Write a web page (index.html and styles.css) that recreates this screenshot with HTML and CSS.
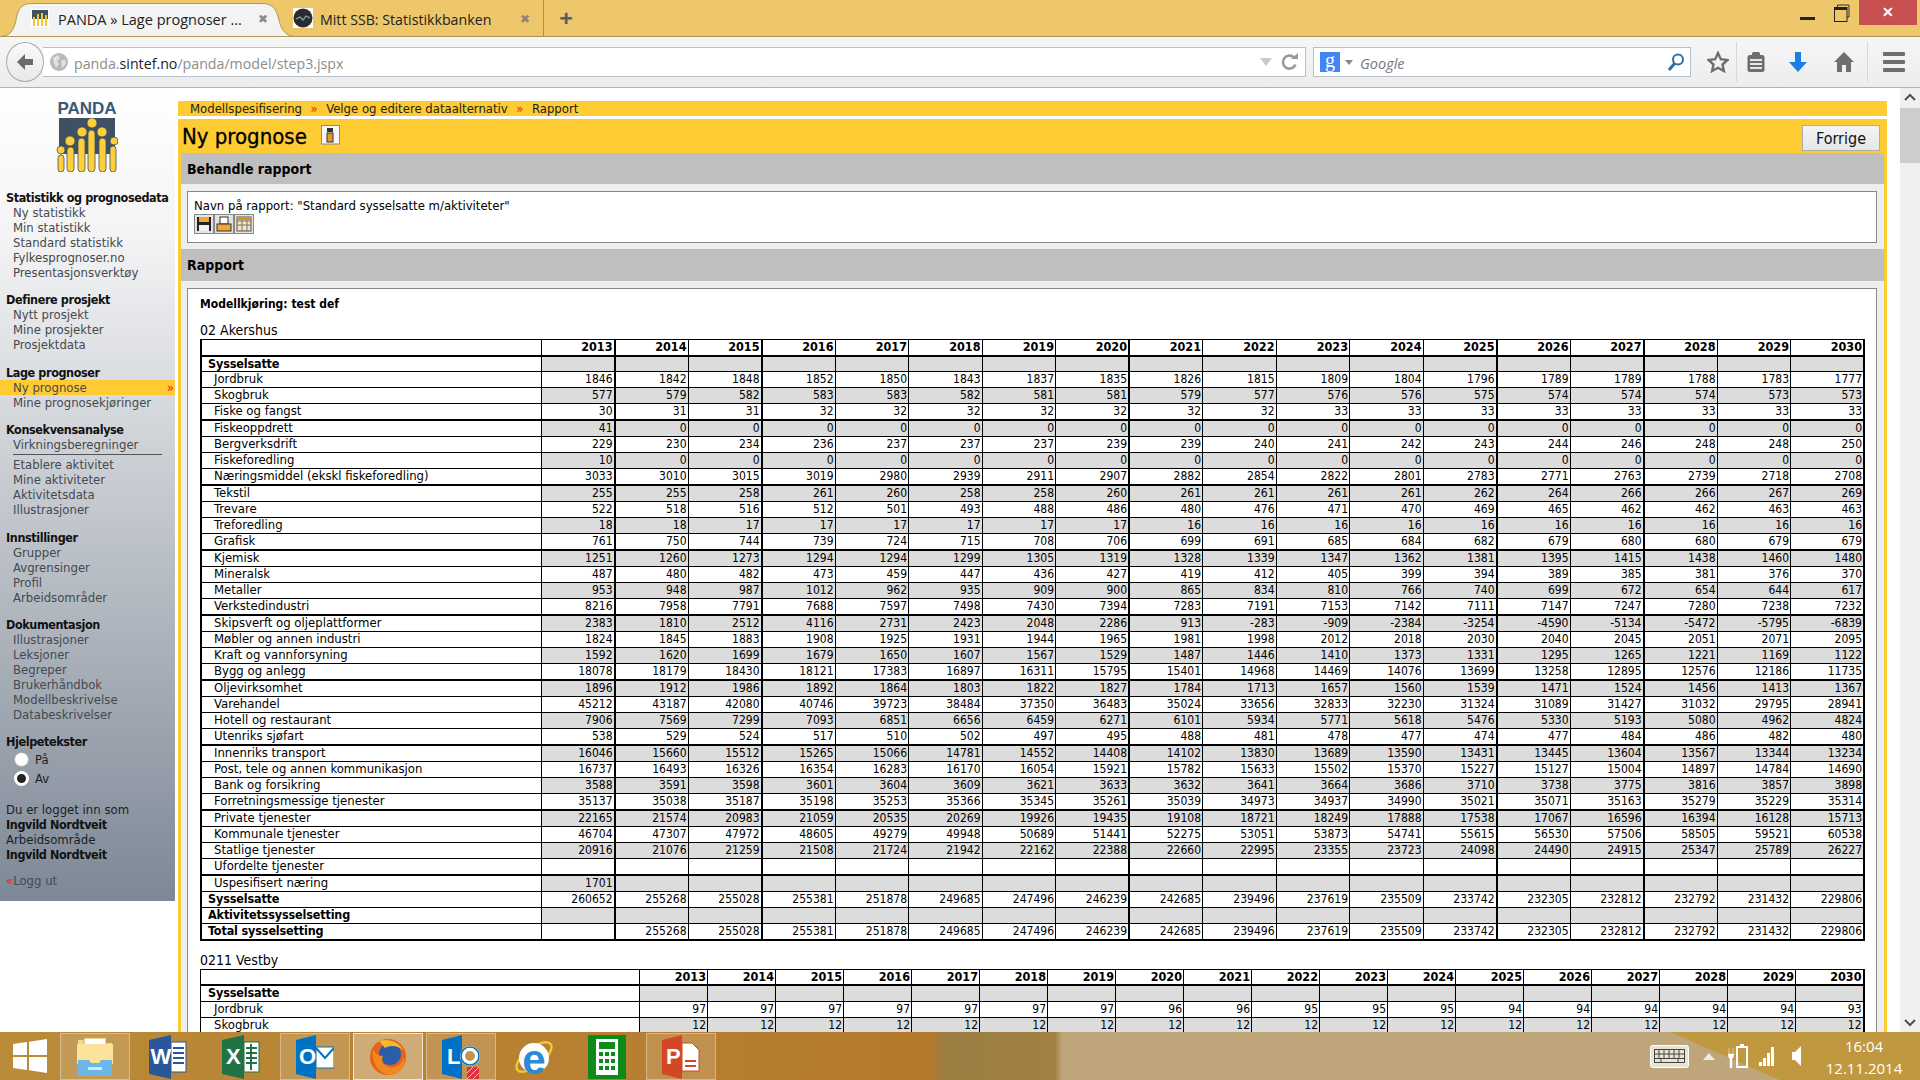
FILE: index.html
```html
<!DOCTYPE html>
<html lang="en">
<head>
    <meta charset="UTF-8">
    <title>PANDA » Lage prognoser</title>
    <link rel="stylesheet" href="styles.css">
</head>
<body>
    <div class="titlebar">
        <div class="tab tab-active">
            <svg class="tab-shape" width="296" height="37"><path d="M0 36.5C10 36.5 14 30 16 20C18 8 22 3.5 32 3.5L262 3.5C272 3.5 276 8 279 20C281 30 286 36.5 296 36.5Z" fill="#f3f3f3" stroke="#b3975a"/></svg>
            <svg class="favicon" width="18" height="18" viewBox="0 0 18 18"><rect width="18" height="18" fill="#fff"/><rect x="1" y="1" width="16" height="9" fill="#3e5062"/><g fill="#f5c72c"><rect x="2" y="8" width="2" height="9"/><rect x="6" y="5" width="2" height="12"/><rect x="10" y="4" width="2" height="13"/><rect x="14" y="6" width="2" height="11"/></g></svg>
            <span class="tab-label tab-label-first">PANDA » Lage prognoser ...</span>
            <span class="tab-close">✖</span>
        </div>
        <div class="tab tab-other">
            <svg class="favicon" width="20" height="20" viewBox="0 0 20 20"><rect width="20" height="20" fill="#fff"/><circle cx="10" cy="10" r="9.5" fill="#2b2b2b"/><path d="M3 11L7 9L10 12L13 8L17 10" fill="none" stroke="#8aa" stroke-width="1.2"/></svg>
            <span class="tab-label">Mitt SSB: Statistikkbanken</span>
            <span class="tab-close">✖</span>
        </div>
        <div class="new-tab">+</div>
        <div class="window-controls">
            <svg class="win-min" width="15" height="3"><rect width="15" height="3" fill="#222"/></svg>
            <svg class="win-max" width="16" height="18" viewBox="0 0 16 18"><path d="M3.5 3V1H15V13H13" fill="none" stroke="#333"/><rect x="0.5" y="3.5" width="12.5" height="14" fill="none" stroke="#222"/><rect x="0" y="3" width="13" height="3" fill="#222"/></svg>
            <div class="win-close">✕</div>
        </div>
    </div>

    <div class="toolbar">
        <div class="back-btn">
            <svg width="20" height="20" viewBox="0 0 20 20"><path d="M10 2L2 10L10 18V13H18V7H10Z" fill="#6b6b6b"/></svg>
        </div>
        <div class="url-bar">
            <svg class="globe" width="18" height="18" viewBox="0 0 18 18"><circle cx="9" cy="9" r="9" fill="#b9b9b9"/><path d="M3 5L8 2L10 5L7 8L9 11L6 15L4 10ZM11 8L15 6L16 11L12 15Z" fill="#e2e2e2"/></svg>
            <span class="url-text">panda.<b>sintef.no</b>/panda/model/step3.jspx</span>
            <svg class="url-drop" width="12" height="8"><path d="M0 0H12L6 8Z" fill="#c9c9c9"/></svg>
            <svg class="url-reload" width="20" height="20" viewBox="0 0 20 20"><path d="M15.5 12.5A6.5 6.5 0 1 1 14 5.5" fill="none" stroke="#9a9a9a" stroke-width="2.6"/><path d="M11 7H18V1Z" fill="#9a9a9a"/></svg>
        </div>
        <div class="search-bar">
            <div class="search-engine">g</div>
            <svg class="search-drop" width="8" height="5"><path d="M0 0H8L4 5Z" fill="#888"/></svg>
            <span class="search-text">Google</span>
            <svg width="18" height="20" viewBox="0 0 18 20"><circle cx="11" cy="7.5" r="5" fill="none" stroke="#2f6ea8" stroke-width="2"/><path d="M7.5 11.5L2 18" stroke="#2f6ea8" stroke-width="3"/></svg>
        </div>
        <div class="tool-slot tool-star">
            <svg width="22" height="22" viewBox="0 0 22 22"><path d="M11 2L13.8 8.2L20.5 9L15.5 13.5L16.9 20L11 16.8L5.1 20L6.5 13.5L1.5 9L8.2 8.2Z" fill="none" stroke="#6e6e6e" stroke-width="2.4"/></svg>
        </div>
        <div class="tool-slot tool-clip">
            <svg width="20" height="22" viewBox="0 0 20 22"><rect x="1.5" y="4" width="17" height="17" rx="2.5" fill="#6e6e6e"/><rect x="6" y="1" width="8" height="5" rx="1.5" fill="#6e6e6e"/><g fill="#e8e8e8"><rect x="4" y="8" width="12" height="2"/><rect x="4" y="12" width="12" height="2"/><rect x="4" y="16" width="12" height="2"/></g></svg>
        </div>
        <div class="tool-slot tool-down">
            <svg width="20" height="22" viewBox="0 0 20 22"><path d="M7 1H13V11H19L10 21L1 11H7Z" fill="#1a7fe6"/></svg>
        </div>
        <div class="tool-slot tool-home">
            <svg width="22" height="22" viewBox="0 0 22 22"><path d="M11 1L21 11H18V21H13V14H9V21H4V11H1Z" fill="#6e6e6e"/></svg>
        </div>
        <div class="tool-slot tool-menu">
            <svg width="22" height="20" viewBox="0 0 22 20"><g fill="#6e6e6e"><rect width="22" height="4" rx="1"/><rect y="8" width="22" height="4" rx="1"/><rect y="16" width="22" height="4" rx="1"/></g></svg>
        </div>
    </div>

    <div class="viewport">
        <div class="page">
            <div class="sidebar">
                <div class="logo">
                    <div class="logo-name">PANDA</div>
                    <svg width="62" height="54" viewBox="0 0 62 54">
                        <rect x="3" y="0" width="56" height="36" fill="#3e5062"/>
                        <g fill="#ffcf3a" stroke="#3e5062" stroke-width="0.8">
                            <circle cx="36" cy="5" r="5"/>
                            <circle cx="26" cy="14" r="5"/><circle cx="46" cy="14" r="5"/>
                            <circle cx="14" cy="23" r="5"/><circle cx="58" cy="23" r="4"/>
                            <circle cx="5" cy="32" r="4"/>
                            <rect x="2" y="37" width="6" height="17" rx="3"/>
                            <rect x="11" y="29" width="7" height="25" rx="3.5"/>
                            <rect x="22" y="20" width="7" height="34" rx="3.5"/>
                            <rect x="32" y="12" width="7" height="42" rx="3.5"/>
                            <rect x="43" y="20" width="7" height="34" rx="3.5"/>
                            <rect x="54" y="28" width="6" height="26" rx="3"/>
                        </g>
                    </svg>
                </div>
                <div class="nav-group">
                    <div class="nav-head">Statistikk og prognosedata</div>
                    <a class="nav-item">Ny statistikk</a>
                    <a class="nav-item">Min statistikk</a>
                    <a class="nav-item">Standard statistikk</a>
                    <a class="nav-item">Fylkesprognoser.no</a>
                    <a class="nav-item">Presentasjonsverktøy</a>
                </div>
                <div class="nav-group">
                    <div class="nav-head">Definere prosjekt</div>
                    <a class="nav-item">Nytt prosjekt</a>
                    <a class="nav-item">Mine prosjekter</a>
                    <a class="nav-item">Prosjektdata</a>
                </div>
                <div class="nav-group">
                    <div class="nav-head">Lage prognoser</div>
                    <a class="nav-item nav-current">Ny prognose<span class="nav-arrow">»</span></a>
                    <a class="nav-item">Mine prognosekjøringer</a>
                </div>
                <div class="nav-group">
                    <div class="nav-head">Konsekvensanalyse</div>
                    <a class="nav-item">Virkningsberegninger</a>
                    <div class="nav-rule"></div>
                    <a class="nav-item">Etablere aktivitet</a>
                    <a class="nav-item">Mine aktiviteter</a>
                    <a class="nav-item">Aktivitetsdata</a>
                    <a class="nav-item">Illustrasjoner</a>
                </div>
                <div class="nav-group">
                    <div class="nav-head">Innstillinger</div>
                    <a class="nav-item">Grupper</a>
                    <a class="nav-item">Avgrensinger</a>
                    <a class="nav-item">Profil</a>
                    <a class="nav-item">Arbeidsområder</a>
                </div>
                <div class="nav-group">
                    <div class="nav-head">Dokumentasjon</div>
                    <a class="nav-item">Illustrasjoner</a>
                    <a class="nav-item">Leksjoner</a>
                    <a class="nav-item">Begreper</a>
                    <a class="nav-item">Brukerhåndbok</a>
                    <a class="nav-item">Modellbeskrivelse</a>
                    <a class="nav-item">Databeskrivelser</a>
                </div>
                <div class="nav-group nav-help">
                    <div class="nav-head">Hjelpetekster</div>
                    <div class="help-option"><span class="radio"></span>På</div>
                    <div class="help-option"><span class="radio radio-on"></span>Av</div>
                </div>
                <div class="nav-user">
                    <div>Du er logget inn som</div>
                    <div class="nav-head">Ingvild Nordtveit</div>
                    <div>Arbeidsområde</div>
                    <div class="nav-head">Ingvild Nordtveit</div>
                </div>
                <div class="nav-logout"><span class="red">«</span>Logg ut</div>
            </div>

            <div class="main">
                <div class="breadcrumb">
                    <span>Modellspesifisering</span><span class="red">»</span><span>Velge og editere dataalternativ</span><span class="red">»</span><span>Rapport</span>
                </div>
                <div class="panel">
                    <div class="title-row">
                        <span class="page-title">Ny prognose</span>
                        <svg class="info-icon" width="19" height="20" viewBox="0 0 19 20"><rect x="0.5" y="0.5" width="18" height="18.5" fill="#f7f7f7" stroke="#8a8a8a"/><rect x="6" y="3" width="6" height="4" fill="#333"/><rect x="6" y="8" width="6" height="9" fill="#e59a2b" stroke="#333"/></svg>
                        <button class="btn-back">Forrige</button>
                    </div>
                    <div class="section-head">Behandle rapport</div>
                    <div class="section-body">
                        <div class="box box-report">
                            <div>Navn på rapport: "Standard sysselsatte m/aktiviteter"</div>
                            <div class="report-icons">
                                <svg width="20" height="20" viewBox="0 0 20 20"><rect x="0.5" y="0.5" width="19" height="19" fill="#e4e4e4" stroke="#888"/><rect x="3" y="3" width="14" height="14" fill="#222"/><rect x="5" y="3" width="10" height="5" fill="#f2a63a"/><rect x="5" y="11" width="10" height="6" fill="#f2f2f2"/></svg><svg width="20" height="20" viewBox="0 0 20 20"><rect x="0.5" y="0.5" width="19" height="19" fill="#e4e4e4" stroke="#888"/><rect x="6" y="3" width="8" height="7" fill="#fff" stroke="#333"/><rect x="3" y="10" width="14" height="7" fill="#f2a63a" stroke="#333"/></svg><svg width="20" height="20" viewBox="0 0 20 20"><rect x="0.5" y="0.5" width="19" height="19" fill="#e4e4e4" stroke="#888"/><rect x="3" y="3" width="14" height="14" fill="#f7e2c0" stroke="#555"/><path d="M3 7H17M3 11H17M8 3V17M13 3V17" stroke="#777"/><rect x="3" y="3" width="14" height="3" fill="#d9902e"/></svg>
                            </div>
                        </div>
                    </div>
                    <div class="section-head section-head-tall">Rapport</div>
                    <div class="section-body">
                        <div class="box box-tables">
                            <div class="run-name">Modellkjøring: test def</div>
                            <div class="region-name region-first">02 Akershus</div>
                            <table id="table-akershus" class="report-table"></table>
                            <div class="region-name region-next">0211 Vestby</div>
                            <table id="table-vestby" class="report-table report-table-small"></table>
                        </div>
                    </div>
                </div>
            </div>
        </div>
        <div class="scrollbar">
            <svg class="scroll-arrow" width="20" height="20"><path d="M5 12L10 7L15 12" fill="none" stroke="#505050" stroke-width="2"/></svg>
            <div class="scroll-thumb"></div>
            <svg class="scroll-arrow scroll-arrow-down" width="20" height="20"><path d="M5 8L10 13L15 8" fill="none" stroke="#505050" stroke-width="2"/></svg>
        </div>
    </div>

    <div class="taskbar">
        <div class="start-btn">
            <svg width="34" height="34" viewBox="0 0 34 34"><path d="M0 5L14 3V16H0ZM16 2.700L34 0V16H16ZM0 18H14V31L0 29ZM16 18H34V34L16 31.300Z" fill="#fff"/></svg>
        </div>
        <div class="task-app task-open">
            <svg width="38" height="40" viewBox="0 0 38 40"><path d="M2 3H14L17 6H36V20H2Z" fill="#f5d77c"/><rect x="8" y="1" width="22" height="8" fill="#fff" stroke="#cfa94a"/><rect x="1" y="7" width="36" height="20" fill="#fbe49a"/><path d="M2 23H13L15 26H23L25 23H36V39H2Z" fill="#6db7e8"/><path d="M12 30H26V33H12Z" fill="#cfe9f8"/></svg>
        </div>
        <div class="task-app">
            <svg width="38" height="44" viewBox="0 0 38 44"><path d="M22 0L0 5V39L22 44Z" fill="#2b579a"/><rect x="22" y="7" width="15" height="30" fill="#fff" stroke="#2b579a"/><path d="M24 13H35M24 18H35M24 23H35M24 28H35" stroke="#2b579a" stroke-width="2"/><text x="1.500" y="29" class="app-letter">W</text></svg>
        </div>
        <div class="task-app">
            <svg width="38" height="44" viewBox="0 0 38 44"><path d="M22 0L0 5V39L22 44Z" fill="#217346"/><rect x="22" y="7" width="15" height="30" fill="#fff" stroke="#217346"/><path d="M24 13H35M24 18H35M24 23H35M24 28H35M29 9V35" stroke="#217346" stroke-width="2"/><text x="4" y="29" class="app-letter">X</text></svg>
        </div>
        <div class="task-app task-open">
            <svg width="38" height="44" viewBox="0 0 38 44"><path d="M20 0L0 5V39L20 44Z" fill="#0072c6"/><rect x="20" y="12" width="18" height="21" fill="#fff" stroke="#0072c6"/><path d="M20 13L29 23L38 13" fill="none" stroke="#0072c6" stroke-width="2"/><text x="3" y="29" class="app-letter">O</text></svg>
        </div>
        <div class="task-app task-active">
            <svg width="38" height="38" viewBox="0 0 38 38"><circle cx="19" cy="19" r="18" fill="#e8601c"/><circle cx="21" cy="16" r="11" fill="#2b5ea8"/><path d="M4 12C2 24 10 37 22 37C32 37 37 26 35 19C33 27 26 31 19 29C14 27 12 22 14 18C9 18 6 15 4 12Z" fill="#f0891e"/><path d="M10 3C18 0 30 3 34 12C28 7 20 7 16 10Z" fill="#f5b82e"/></svg>
        </div>
        <div class="task-app task-open">
            <svg width="38" height="44" viewBox="0 0 38 44"><path d="M20 0L0 5V39L20 44Z" fill="#0072c6"/><text x="5" y="29" class="app-letter">L</text><circle cx="28" cy="21" r="7.500" fill="none" stroke="#fff" stroke-width="5"/><circle cx="28" cy="21" r="9" fill="none" stroke="#0072c6" stroke-width="1.500"/><rect x="25" y="32" width="12" height="12" fill="#d8343a"/><path d="M25 38L31 32M25 44L37 32M31 44L37 38" stroke="#eca" stroke-width="1"/></svg>
        </div>
        <div class="task-app">
            <svg width="38" height="44" viewBox="0 0 38 44"><ellipse cx="19" cy="22" rx="21" ry="9" transform="rotate(-38 19 22)" fill="none" stroke="#f5c52c" stroke-width="2.500"/><circle cx="19" cy="23" r="15" fill="#fff"/><text x="19" y="39" text-anchor="middle" class="ie-letter">e</text></svg>
        </div>
        <div class="task-app">
            <svg width="38" height="44" viewBox="0 0 38 44"><rect width="38" height="44" fill="#0d8a1a"/><rect x="8" y="4" width="22" height="36" fill="#fff"/><rect x="11" y="7" width="16" height="7" fill="#0d8a1a"/><g fill="#0d8a1a"><rect x="11" y="17" width="4" height="4"/><rect x="17" y="17" width="4" height="4"/><rect x="23" y="17" width="4" height="4"/><rect x="11" y="24" width="4" height="4"/><rect x="17" y="24" width="4" height="4"/><rect x="23" y="24" width="4" height="4"/><rect x="11" y="31" width="4" height="4"/><rect x="17" y="31" width="4" height="4"/><rect x="23" y="31" width="4" height="4"/></g></svg>
        </div>
        <div class="task-app task-open">
            <svg width="38" height="44" viewBox="0 0 38 44"><path d="M20 0L0 5V39L20 44Z" fill="#d24726"/><path d="M20 8H30L37 15V36H20Z" fill="#fff" stroke="#d24726"/><path d="M23 26H34M23 31H34" stroke="#d24726" stroke-width="2"/><text x="4" y="29" class="app-letter">P</text></svg>
        </div>
        <div class="tray">
            <svg class="tray-keyboard" width="39" height="23" viewBox="0 0 39 23"><rect x="0.5" y="0.5" width="38" height="22" rx="2" fill="#e9e3d4" stroke="#fff"/><g fill="none" stroke="#444"><rect x="4.500" y="4.500" width="30" height="13"/><path d="M4.500 9H34.500M4.500 13.500H34.500M9 4.500V13.500M14 4.500V13.500M19 4.500V13.500M24 4.500V13.500M29 4.500V13.500M11 13.500V17.500M28 13.500V17.500"/></g></svg>
            <svg class="tray-up" width="12" height="7"><path d="M0 7L6 0L12 7Z" fill="#f0ece0"/></svg>
            <svg class="tray-power" width="20" height="24" viewBox="0 0 20 24"><path d="M1 4V10M5 4V10M0 10H6L5 14H4V24H2V14H1Z" fill="#fff" stroke="#fff" stroke-width="0.500"/><rect x="9" y="3" width="10" height="20" fill="none" stroke="#fff" stroke-width="2"/><rect x="12" y="0" width="4" height="3" fill="#fff"/></svg>
            <svg class="tray-signal" width="16" height="20" viewBox="0 0 16 20"><g fill="#fff"><rect x="0" y="16" width="3" height="4"/><rect x="4" y="12" width="3" height="8"/><rect x="8" y="7" width="3" height="13"/><rect x="12" y="1" width="3" height="19"/></g></svg>
            <svg class="tray-sound" width="10" height="20" viewBox="0 0 10 20"><path d="M9 0V20L3 14H0V6H3Z" fill="#fff"/></svg>
            <div class="clock">
                <div>16:04</div>
                <div>12.11.2014</div>
            </div>
        </div>
    </div>

    <script src="tables.js"></script>
</body>
</html>
```

FILE: styles.css
```css
* {
    box-sizing: border-box;
}
html, body {
    margin: 0;
    height: 100%;
    overflow: hidden;
}
body {
    width: 1920px;
    height: 1080px;
    display: flex;
    flex-direction: column;
    font-family: "DejaVu Sans Condensed", "DejaVu Sans", sans-serif;
    font-size: 13px;
    line-height: 15px;
    color: #000;
    background: #fff;
}
.red {
    color: #e02a10;
}

/* window title bar and tabs */
.titlebar {
    height: 37px;
    flex: none;
    display: flex;
    background: #eec76a;
    border-bottom: 1px solid #a8905a;
    font-family: "Open Sans", sans-serif;
    font-size: 14.2px;
    color: #222;
}
.tab {
    position: relative;
    height: 36px;
    display: flex;
    align-items: center;
}
.tab-shape {
    position: absolute;
    left: 0;
    top: 0;
}
.tab-active {
    width: 293px;
    padding-left: 31px;
}
.tab-other {
    width: 251px;
    border-right: 1px solid #a8905a;
}
.favicon {
    position: relative;
    flex: none;
}
.tab-label {
    position: relative;
    margin: 2px 0 0 7px;
    white-space: nowrap;
}
.tab-label-first {
    margin-left: 9px;
    font-size: 14.5px;
}
.tab-close {
    position: absolute;
    top: 11px;
    font-size: 12px;
    color: #8a8a8a;
}
.tab-active .tab-close {
    left: 258px;
}
.tab-other .tab-close {
    left: 227px;
    color: #8f8570;
}
.new-tab {
    width: 44px;
    text-align: center;
    font-size: 24px;
    line-height: 36px;
    font-weight: 700;
    color: #4c6172;
}
.window-controls {
    margin-left: auto;
    display: flex;
    align-items: flex-start;
    padding-right: 3px;
}
.win-min {
    margin: 17px 19px 0 0;
}
.win-max {
    margin: 4px 9px 0 0;
}
.win-close {
    width: 58px;
    height: 25px;
    background: #c75050;
    color: #fff;
    text-align: center;
    font-size: 14px;
    line-height: 24px;
    font-weight: 700;
}

/* browser toolbar */
.toolbar {
    height: 51px;
    flex: none;
    display: flex;
    align-items: center;
    padding-left: 6px;
    background: linear-gradient(#f6f6f6, #ededed);
    border-bottom: 1px solid #b2b2b2;
}
.back-btn {
    position: relative;
    z-index: 1;
    width: 38px;
    height: 40px;
    flex: none;
    display: flex;
    align-items: center;
    justify-content: center;
    border: 1px solid #a9a9a9;
    border-radius: 50%;
    background: linear-gradient(#fafafa, #e9e9e9);
}
.url-bar {
    width: 1263px;
    height: 30px;
    margin-left: -1px;
    flex: none;
    display: flex;
    align-items: center;
    padding-left: 7px;
    background: #fff;
    border: 1px solid #b8c0cc;
    border-left: none;
    font-family: "Open Sans", sans-serif;
    font-size: 14.2px;
    color: #8c8c8c;
}
.url-text {
    margin-top: 2px;
}
.url-text b {
    font-weight: 400;
    color: #222;
}
.globe {
    margin-right: 6px;
}
.url-drop {
    margin-left: auto;
    margin-right: -3px;
}
.url-reload {
    margin: 0 5px 0 11px;
}
.search-bar {
    width: 378px;
    height: 30px;
    margin-left: 7px;
    flex: none;
    display: flex;
    align-items: center;
    padding: 0 5px 0 6px;
    background: #fff;
    border: 1px solid #b8c0cc;
}
.search-engine {
    width: 20px;
    height: 20px;
    background: #4285f4;
    color: #fff;
    text-align: center;
    font-family: "Liberation Serif", serif;
    font-size: 20px;
    line-height: 17px;
}
.search-drop {
    margin-left: 5px;
}
.search-text {
    margin: 2px auto 0 7px;
    font-family: "Open Sans", sans-serif;
    font-size: 14.5px;
    font-style: italic;
    color: #777;
}
.tool-slot {
    height: 40px;
    flex: none;
    display: flex;
    align-items: center;
    justify-content: center;
}
.tool-star {
    width: 37px;
    margin-left: 9px;
    border-right: 1px solid #d8d8d8;
}
.tool-clip {
    width: 38px;
}
.tool-down {
    width: 45px;
}
.tool-home {
    width: 48px;
    border-right: 1px solid #d8d8d8;
}
.tool-menu {
    width: 52px;
}

/* page area */
.viewport {
    height: 944px;
    flex: none;
    display: flex;
    overflow: hidden;
}
.page {
    width: 1900px;
    flex: none;
    display: flex;
    align-items: flex-start;
}
.scrollbar {
    width: 20px;
    flex: none;
    display: flex;
    flex-direction: column;
    background: #f0f0f0;
}
.scroll-arrow {
    display: block;
}
.scroll-thumb {
    height: 55px;
    background: #cdcdcd;
}
.scroll-arrow-down {
    margin-top: auto;
}

/* left menu */
.sidebar {
    width: 175px;
    height: 813px;
    flex: none;
    padding: 12px 0 0 6px;
    background: linear-gradient(#fff 0, #f4f4f5 18%, #7d8896 100%);
    color: #45494f;
}
.logo {
    width: 62px;
    height: 90px;
    margin-left: 50px;
    text-align: center;
}
.logo-name {
    height: 18px;
    font-family: "Liberation Sans", sans-serif;
    font-size: 17px;
    line-height: 17px;
    font-weight: 700;
    color: #3b5877;
}
.logo svg {
    display: block;
}
.nav-group {
    margin-bottom: 12.4px;
}
.nav-head {
    color: #111;
    font-size: 12.5px;
    font-weight: 700;
    letter-spacing: -0.4px;
}
.nav-item {
    display: block;
    position: relative;
    margin-left: -6px;
    padding-left: 13px;
}
.nav-current {
    background: #ffcb33;
}
.nav-arrow {
    position: absolute;
    right: 1px;
    color: #e02a10;
}
.nav-rule {
    height: 1px;
    margin: 2px 13px 2px 7px;
    background: #555;
}
.nav-help .nav-head {
    margin-bottom: 1px;
}
.help-option {
    display: flex;
    align-items: center;
    height: 19px;
    margin-left: 8px;
    color: #222;
}
.radio {
    width: 15px;
    height: 15px;
    margin-right: 6px;
    border-radius: 50%;
    background: #fff;
    border: 1px solid #aaa;
}
.radio-on {
    border: 3px solid #fff;
    background: #222;
}
.nav-user {
    margin-top: 14px;
    color: #1c1c1c;
}
.nav-logout {
    margin-top: 11px;
}

/* main column */
.main {
    width: 1709px;
    margin-left: 3px;
    flex: none;
    padding-top: 13px;
}
.breadcrumb {
    height: 15px;
    margin-bottom: 3px;
    padding-left: 12px;
    display: flex;
    gap: 8.5px;
    background: #ffcb33;
    color: #222;
}
.panel {
    padding: 0 3px;
    background: #ffcb33;
}
.title-row {
    height: 34px;
    margin: 0 -3px;
    display: flex;
    align-items: center;
    padding: 0 7px 0 4px;
}
.page-title {
    margin-top: 2px;
    font-size: 22px;
    line-height: 32px;
    -webkit-text-stroke: 0.3px #000;
}
.info-icon {
    margin: -2px 0 0 14px;
}
.btn-back {
    margin: 4px 0 0 auto;
    width: 78px;
    height: 26px;
    padding: 0;
    font-family: inherit;
    font-size: 16px;
    color: #111;
    background: linear-gradient(#f4f4f4, #e6e6e6);
    border: 1px solid #adadad;
}
.section-head {
    height: 31px;
    padding-left: 6px;
    background: #bfbfbf;
    font-size: 14px;
    font-weight: 700;
    line-height: 32px;
}
.section-head-tall {
    height: 32px;
    line-height: 33px;
}
.section-body {
    padding: 7px 7px 6px 6px;
    background: #eee;
}
.box {
    background: #fff;
    border: 1px solid #888;
}
.box-report {
    height: 52px;
    padding: 6px 6px 0;
}
.report-icons {
    height: 20px;
    margin-top: 1px;
    display: flex;
}
.box-tables {
    padding: 8px 12px 60px;
}
.run-name {
    font-size: 12px;
    font-weight: 700;
}
.region-name {
    height: 15px;
    font-size: 14px;
    line-height: 13px;
}
.region-first {
    margin-top: 12px;
}
.region-next {
    margin-top: 13px;
}

/* report tables */
.report-table {
    width: 1663px;
    table-layout: fixed;
    border-collapse: collapse;
    border-top: 1px solid #000;
    border-left: 2px solid #000;
    border-right: 2px solid #000;
    border-bottom: 2px solid #000;
}
.report-table td,
.report-table th {
    height: 16px;
    padding: 0 1px 0 0;
    text-align: right;
    font-size: 12px;
    line-height: 15px;
    font-weight: 400;
    white-space: nowrap;
    overflow: hidden;
    border: 1px solid #000;
}
.report-table th {
    vertical-align: top;
    font-size: 12.5px;
    line-height: 14px;
    font-weight: 700;
}
.report-table .label {
    padding-left: 12px;
    vertical-align: top;
    font-size: 13px;
    line-height: 14px;
    text-align: left;
}
.report-table .label-bold {
    padding-left: 6px;
    font-size: 12.5px;
    letter-spacing: -0.15px;
    font-weight: 700;
}
.report-table .thick {
    border-right-width: 2px;
}
.report-table .shade {
    background: #dcdcdc;
}
.report-table .group-end td,
.report-table .group-end th {
    border-bottom-width: 2px;
}
.report-table-small {
    border-left-width: 1px;
    border-bottom: none;
}
.report-table-small .label {
    padding-left: 13px;
}
.report-table-small .label-bold {
    padding-left: 7px;
}

/* windows taskbar */
.taskbar {
    height: 48px;
    flex: none;
    display: flex;
    background:
        linear-gradient(23.6deg, transparent 712px, #c0983f 713px),
        linear-gradient(90deg, #ba8b39 0, #b5792d 930px, #9c7e42 945px, #a28143 1055px, #bfa67a 1062px);
}
.start-btn {
    width: 60px;
    flex: none;
    display: flex;
    align-items: center;
    justify-content: center;
}
.task-app {
    width: 70px;
    height: 47px;
    margin: 1px 3.200px 0 0;
    flex: none;
    display: flex;
    align-items: center;
    justify-content: center;
    border: 1px solid transparent;
}
.task-app svg {
    display: block;
}
.task-open {
    background: rgba(255, 255, 255, 0.15);
    border-color: rgba(255, 255, 255, 0.35);
}
.task-active {
    background: rgba(255, 255, 255, 0.32);
    border-color: rgba(255, 255, 255, 0.7);
}
.app-letter {
    font-family: "Liberation Sans", sans-serif;
    font-size: 22px;
    font-weight: 700;
    fill: #fff;
}
.ie-letter {
    font-family: "Liberation Sans", sans-serif;
    font-size: 42px;
    font-weight: 700;
    fill: #2b8ad8;
}
.tray {
    margin-left: auto;
    display: flex;
    align-items: center;
}
.tray-up {
    margin-left: 14px;
}
.tray-power {
    margin-left: 13px;
}
.tray-signal {
    margin-left: 11px;
}
.tray-sound {
    margin-left: 17px;
}
.clock {
    width: 84px;
    margin: 2px 14px 0 20px;
    text-align: center;
    font-family: "Open Sans", sans-serif;
    font-size: 15px;
    line-height: 22px;
    color: #fff;
}
```

FILE: tables.js
```js
const years = [2013, 2014, 2015, 2016, 2017, 2018, 2019, 2020, 2021, 2022, 2023, 2024, 2025, 2026, 2027, 2028, 2029, 2030];
const thickYears = [2013, 2015, 2020, 2025, 2027];

const totals = "255268 255028 255381 251878 249685 247496 246239 242685 239496 237619 235509 233742 232305 232812 232792 231432 229806";

// label, values, bold row
const akershus = [
    ["Sysselsatte", "", true],
    ["Jordbruk", "1846 1842 1848 1852 1850 1843 1837 1835 1826 1815 1809 1804 1796 1789 1789 1788 1783 1777"],
    ["Skogbruk", "577 579 582 583 583 582 581 581 579 577 576 576 575 574 574 574 573 573"],
    ["Fiske og fangst", "30 31 31 32 32 32 32 32 32 32 33 33 33 33 33 33 33 33"],
    ["Fiskeoppdrett", "41 0 0 0 0 0 0 0 0 0 0 0 0 0 0 0 0 0"],
    ["Bergverksdrift", "229 230 234 236 237 237 237 239 239 240 241 242 243 244 246 248 248 250"],
    ["Fiskeforedling", "10 0 0 0 0 0 0 0 0 0 0 0 0 0 0 0 0 0"],
    ["Næringsmiddel (ekskl fiskeforedling)", "3033 3010 3015 3019 2980 2939 2911 2907 2882 2854 2822 2801 2783 2771 2763 2739 2718 2708"],
    ["Tekstil", "255 255 258 261 260 258 258 260 261 261 261 261 262 264 266 266 267 269"],
    ["Trevare", "522 518 516 512 501 493 488 486 480 476 471 470 469 465 462 462 463 463"],
    ["Treforedling", "18 18 17 17 17 17 17 17 16 16 16 16 16 16 16 16 16 16"],
    ["Grafisk", "761 750 744 739 724 715 708 706 699 691 685 684 682 679 680 680 679 679"],
    ["Kjemisk", "1251 1260 1273 1294 1294 1299 1305 1319 1328 1339 1347 1362 1381 1395 1415 1438 1460 1480"],
    ["Mineralsk", "487 480 482 473 459 447 436 427 419 412 405 399 394 389 385 381 376 370"],
    ["Metaller", "953 948 987 1012 962 935 909 900 865 834 810 766 740 699 672 654 644 617"],
    ["Verkstedindustri", "8216 7958 7791 7688 7597 7498 7430 7394 7283 7191 7153 7142 7111 7147 7247 7280 7238 7232"],
    ["Skipsverft og oljeplattformer", "2383 1810 2512 4116 2731 2423 2048 2286 913 -283 -909 -2384 -3254 -4590 -5134 -5472 -5795 -6839"],
    ["Møbler og annen industri", "1824 1845 1883 1908 1925 1931 1944 1965 1981 1998 2012 2018 2030 2040 2045 2051 2071 2095"],
    ["Kraft og vannforsyning", "1592 1620 1699 1679 1650 1607 1567 1529 1487 1446 1410 1373 1331 1295 1265 1221 1169 1122"],
    ["Bygg og anlegg", "18078 18179 18430 18121 17383 16897 16311 15795 15401 14968 14469 14076 13699 13258 12895 12576 12186 11735"],
    ["Oljevirksomhet", "1896 1912 1986 1892 1864 1803 1822 1827 1784 1713 1657 1560 1539 1471 1524 1456 1413 1367"],
    ["Varehandel", "45212 43187 42080 40746 39723 38484 37350 36483 35024 33656 32833 32230 31324 31089 31427 31032 29795 28941"],
    ["Hotell og restaurant", "7906 7569 7299 7093 6851 6656 6459 6271 6101 5934 5771 5618 5476 5330 5193 5080 4962 4824"],
    ["Utenriks sjøfart", "538 529 524 517 510 502 497 495 488 481 478 477 474 477 484 486 482 480"],
    ["Innenriks transport", "16046 15660 15512 15265 15066 14781 14552 14408 14102 13830 13689 13590 13431 13445 13604 13567 13344 13234"],
    ["Post, tele og annen kommunikasjon", "16737 16493 16326 16354 16283 16170 16054 15921 15782 15633 15502 15370 15227 15127 15004 14897 14784 14690"],
    ["Bank og forsikring", "3588 3591 3598 3601 3604 3609 3621 3633 3632 3641 3664 3686 3710 3738 3775 3816 3857 3898"],
    ["Forretningsmessige tjenester", "35137 35038 35187 35198 35253 35366 35345 35261 35039 34973 34937 34990 35021 35071 35163 35279 35229 35314"],
    ["Private tjenester", "22165 21574 20983 21059 20535 20269 19926 19435 19108 18721 18249 17888 17538 17067 16596 16394 16128 15713"],
    ["Kommunale tjenester", "46704 47307 47972 48605 49279 49948 50689 51441 52275 53051 53873 54741 55615 56530 57506 58505 59521 60538"],
    ["Statlige tjenester", "20916 21076 21259 21508 21724 21942 22162 22388 22660 22995 23355 23723 24098 24490 24915 25347 25789 26227"],
    ["Ufordelte tjenester", ""],
    ["Uspesifisert næring", "1701"],
    ["Sysselsatte", "260652 " + totals, true],
    ["Aktivitetssysselsetting", "", true],
    ["Total sysselsetting", "- " + totals, true]
];

const vestby = [
    ["Sysselsatte", "", true],
    ["Jordbruk", "97 97 97 97 97 97 97 96 96 95 95 95 94 94 94 94 94 93"],
    ["Skogbruk", "12 12 12 12 12 12 12 12 12 12 12 12 12 12 12 12 12 12"]
];

function buildTable(id, rows, labelWidth, yearWidth, thickList) {
    let html = `<colgroup><col style="width:${labelWidth}px">`;
    years.forEach(() => html += `<col style="width:${yearWidth}px">`);
    html += "</colgroup>";

    // Year row
    html += `<tr class="group-end"><th class="label"></th>`;
    years.forEach(y => {
        html += `<th class="${thickList.includes(y) ? "thick" : ""}">${y}</th>`;
    });
    html += "</tr>";

    rows.forEach((row, i) => {
        const values = row[1] ? row[1].split(" ") : [];
        // Every fourth row closes a group with a heavier line
        const rowClass = (i % 4 === 3) ? "group-end" : "";
        const shade = (i % 2 === 0) ? "shade" : "";
        html += `<tr class="${rowClass}"><td class="label ${row[2] ? "label-bold" : ""}">${row[0]}</td>`;
        years.forEach((y, j) => {
            const value = (values[j] && values[j] !== "-") ? values[j] : "";
            html += `<td class="${shade} ${thickList.includes(y) ? "thick" : ""}">${value}</td>`;
        });
        html += "</tr>";
    });

    document.getElementById(id).innerHTML = html;
}

buildTable("table-akershus", akershus, 340, 73.5, thickYears);
buildTable("table-vestby", vestby, 439, 68, []);
```
